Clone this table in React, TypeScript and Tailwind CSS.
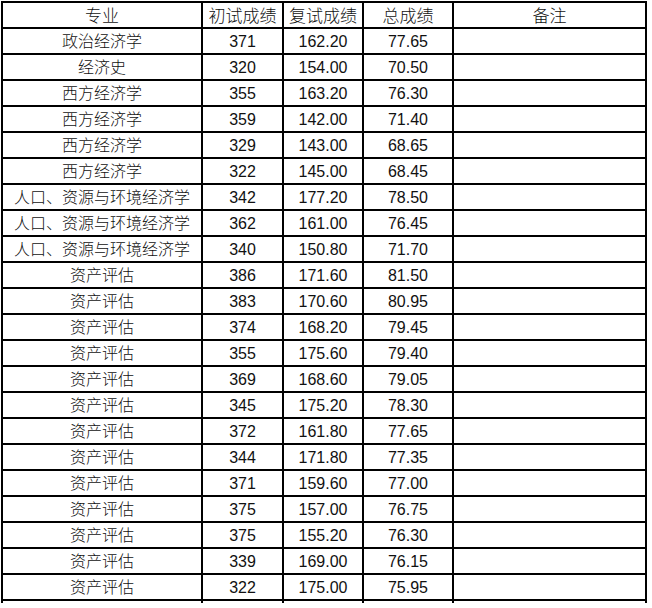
import React from "react";

const rows: [string, string, string, string][] = [
  ["政治经济学", "371", "162.20", "77.65"],
  ["经济史", "320", "154.00", "70.50"],
  ["西方经济学", "355", "163.20", "76.30"],
  ["西方经济学", "359", "142.00", "71.40"],
  ["西方经济学", "329", "143.00", "68.65"],
  ["西方经济学", "322", "145.00", "68.45"],
  ["人口、资源与环境经济学", "342", "177.20", "78.50"],
  ["人口、资源与环境经济学", "362", "161.00", "76.45"],
  ["人口、资源与环境经济学", "340", "150.80", "71.70"],
  ["资产评估", "386", "171.60", "81.50"],
  ["资产评估", "383", "170.60", "80.95"],
  ["资产评估", "374", "168.20", "79.45"],
  ["资产评估", "355", "175.60", "79.40"],
  ["资产评估", "369", "168.60", "79.05"],
  ["资产评估", "345", "175.20", "78.30"],
  ["资产评估", "372", "161.80", "77.65"],
  ["资产评估", "344", "171.80", "77.35"],
  ["资产评估", "371", "159.60", "77.00"],
  ["资产评估", "375", "157.00", "76.75"],
  ["资产评估", "375", "155.20", "76.30"],
  ["资产评估", "339", "169.00", "76.15"],
  ["资产评估", "322", "175.00", "75.95"],
];

const cols = "grid grid-cols-[200px_81px_80px_90px_193px]";
const cell =
  "h-[26px] pt-[2px] border-r-2 border-b-2 border-black flex items-center justify-center whitespace-nowrap overflow-hidden";

export default function App() {
  return (
    <div
      className="w-[652px] h-[608px] bg-white text-[#111] text-[16px] leading-none font-light"
      style={{ fontFamily: '"Liberation Sans", "Noto Sans CJK SC", sans-serif' }}
    >
      <div className="ml-px pt-px">
        <div className="border-l-2 border-t-2 border-black w-[646px]">
          <div className={cols}>
            {["专业", "初试成绩", "复试成绩", "总成绩", "备注"].map((h) => (
              <div key={h} className={cell + " text-[17px]"}>
                {h}
              </div>
            ))}
          </div>
          {rows.map((r, i) => (
            <div key={i} className={cols}>
              <div className={cell}>{r[0]}</div>
              <div className={cell}>{r[1]}</div>
              <div className={cell}>{r[2]}</div>
              <div className={cell}>{r[3]}</div>
              <div className={cell}></div>
            </div>
          ))}
        </div>
        <div className={cols + " border-l-2 border-black w-[646px] h-[2px]"}>
          <div className="border-r-2 border-black" />
          <div className="border-r-2 border-black" />
          <div className="border-r-2 border-black" />
          <div className="border-r-2 border-black" />
          <div className="border-r-2 border-black" />
        </div>
      </div>
    </div>
  );
}
